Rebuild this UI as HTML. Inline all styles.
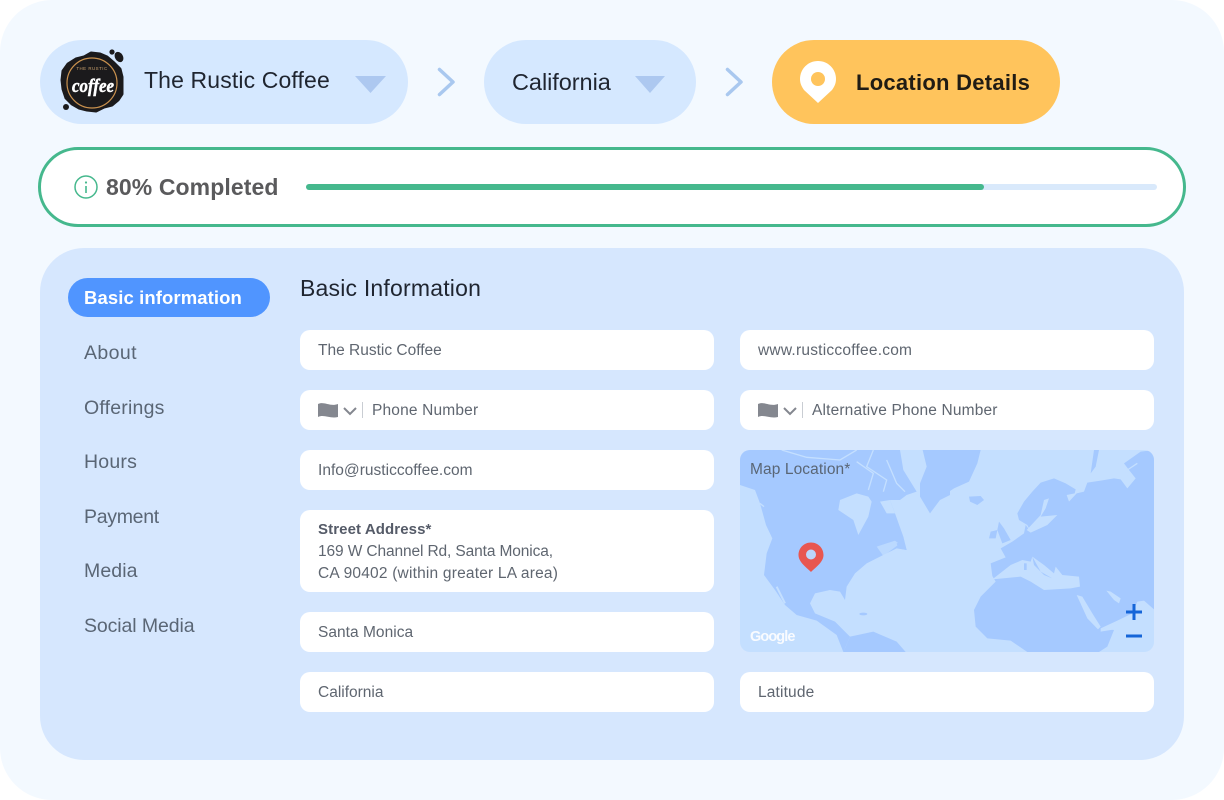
<!DOCTYPE html>
<html><head><meta charset="utf-8"><style>
html,body{margin:0;padding:0;background:#fff}
body{width:1224px;height:800px;position:relative;overflow:hidden;font-family:"Liberation Sans",sans-serif}
#bg{position:absolute;left:0;top:0;width:1224px;height:800px;background:#f3f9ff;border-radius:52px}
.a{position:absolute}
.t{position:absolute;white-space:nowrap;line-height:1}
.pill{position:absolute;background:#d5e8ff;height:84px;top:40px;border-radius:42px}
.f{position:absolute;background:#fff;border-radius:10px;height:40px;width:414px}
.l{left:300px}.r{left:740px}
.ft{position:absolute;white-space:nowrap;font-size:15.500px;line-height:1;color:#5f6670;letter-spacing:0}
.n{position:absolute;left:84px;white-space:nowrap;font-size:19.500px;line-height:1;color:#5a6675;letter-spacing:.1px}
</style></head><body>
<div id="bg"></div>

<div class="pill" style="left:40px;width:368px"></div>
<div class="pill" style="left:484px;width:212px"></div>
<div class="pill" style="left:772px;width:288px;background:#ffc45c"></div>

<svg class="a" style="left:54px;top:44px" width="76" height="76" viewBox="0 0 76 76">
<path d="M8 36 L9 27 L14 20 L22 15 L30 13 L37 9 L46 10 L53 13 L60 19 L66 25 L68 33 L68 42 L68 50 L64 56 L58 61 L50 63 L42 67 L33 66 L25 64 L18 60 L12 54 L9 45 Z" fill="#1b1a1c" stroke="#1b1a1c" stroke-width="3" stroke-linejoin="round"/>
<circle cx="58" cy="8" r="2.600" fill="#1b1a1c"/><ellipse cx="65" cy="13" rx="4" ry="5.500" transform="rotate(-30 65 13)" fill="#1b1a1c"/><circle cx="12" cy="63" r="3" fill="#1b1a1c"/>
<circle cx="38" cy="39" r="25" fill="none" stroke="#c9914e" stroke-width="1.200"/>
<text x="38" y="26" font-size="4.400" fill="#c9a06c" text-anchor="middle" font-family="Liberation Sans" letter-spacing=".5">THE RUSTIC</text>
<text x="39" y="48" font-size="19" font-weight="700" font-style="italic" fill="#fff" stroke="#fff" stroke-width=".5" text-anchor="middle" font-family="Liberation Serif" textLength="42" lengthAdjust="spacingAndGlyphs">coffee</text>
</svg>

<div class="t" style="left:144px;top:69px;font-size:23px;color:#1f2530;letter-spacing:.13px">The Rustic Coffee</div>
<svg class="a" style="left:355px;top:76px" width="31" height="17"><path d="M0 0H31L15.500 17Z" fill="#adc8f0"/></svg>
<svg class="a" style="left:436px;top:66px" width="20" height="32" fill="none"><path d="M3.500 3.500L17 16L3.500 28.500" stroke="#a9c8ef" stroke-width="3.500" stroke-linecap="round" stroke-linejoin="round"/></svg>
<div class="t" style="left:512px;top:71px;font-size:23.500px;color:#1f2530;letter-spacing:-.05px">California</div>
<svg class="a" style="left:635px;top:76px" width="30" height="17"><path d="M0 0H30L15 17Z" fill="#adc8f0"/></svg>
<svg class="a" style="left:724px;top:66px" width="20" height="32" fill="none"><path d="M3.500 3.500L17 16L3.500 28.500" stroke="#a9c8ef" stroke-width="3.500" stroke-linecap="round" stroke-linejoin="round"/></svg>
<svg class="a" style="left:800px;top:61px" width="36" height="42" viewBox="0 0 36 42"><path d="M18 0C8 0 0 8 0 18C0 23 2 26 4 29L18 42L32 29C34 26 36 23 36 18C36 8 28 0 18 0Z" fill="#fff"/><circle cx="18" cy="18" r="7" fill="#ffc45c"/></svg>
<div class="t" style="left:856px;top:72px;font-size:22px;font-weight:700;color:#201c14;letter-spacing:.26px">Location Details</div>

<div class="a" style="left:38px;top:147px;width:1148px;height:80px;box-sizing:border-box;border:3px solid #45b88d;border-radius:40px;background:#fff"></div>
<svg class="a" style="left:74px;top:175px" width="24" height="24" fill="none"><circle cx="12" cy="12" r="11" stroke="#45b88d" stroke-width="1.500"/><path d="M12 11V18" stroke="#45b88d" stroke-width="1.600"/><circle cx="12" cy="7.500" r="1.100" fill="#45b88d"/></svg>
<div class="t" style="left:106px;top:176px;font-size:23px;font-weight:700;color:#5a5a5c;letter-spacing:.1px">80% Completed</div>
<div class="a" style="left:306px;top:184px;width:851px;height:6px;border-radius:3px;background:#d9e9fb"></div>
<div class="a" style="left:306px;top:184px;width:678px;height:6px;border-radius:3px;background:#45b88d"></div>

<div class="a" style="left:40px;top:248px;width:1144px;height:512px;border-radius:44px;background:#d6e7fe"></div>
<div class="a" style="left:68px;top:278px;width:202px;height:39px;border-radius:20px;background:#5095ff"></div>
<div class="t" style="left:84px;top:289px;font-size:18.500px;font-weight:700;color:#fff;letter-spacing:.1px">Basic information</div>
<div class="n" style="top:344px;letter-spacing:.4px">About</div>
<div class="n" style="top:399px;letter-spacing:.2px">Offerings</div>
<div class="n" style="top:453px;letter-spacing:.2px">Hours</div>
<div class="n" style="top:508px;letter-spacing:-.3px">Payment</div>
<div class="n" style="top:562px;letter-spacing:.1px">Media</div>
<div class="n" style="top:617px;letter-spacing:-.1px">Social Media</div>
<div class="t" style="left:300px;top:277px;font-size:23px;color:#1f2530;letter-spacing:.2px">Basic Information</div>

<div class="f l" style="top:330px"></div><div class="ft" style="left:318px;top:343px">The Rustic Coffee</div>
<div class="f r" style="top:330px"></div><div class="ft" style="left:758px;top:343px;letter-spacing:.23px">www.rusticcoffee.com</div>
<div class="f l" style="top:390px"></div>
<svg class="a" style="left:318px;top:402px" width="46" height="18" fill="none"><path d="M0 2C6 -1 12 5 20 2V15C12 17 6 12 0 15Z" fill="#84878f"/><path d="M26 6L32 12L38 6" stroke="#84878f" stroke-width="2"/><path d="M44.500 0V16" stroke="#c9cdd3"/></svg>
<div class="ft" style="left:372px;top:403px;letter-spacing:.17px">Phone Number</div>
<div class="f r" style="top:390px"></div>
<svg class="a" style="left:758px;top:402px" width="46" height="18" fill="none"><path d="M0 2C6 -1 12 5 20 2V15C12 17 6 12 0 15Z" fill="#84878f"/><path d="M26 6L32 12L38 6" stroke="#84878f" stroke-width="2"/><path d="M44.500 0V16" stroke="#c9cdd3"/></svg>
<div class="ft" style="left:812px;top:403px;letter-spacing:.16px">Alternative Phone Number</div>
<div class="f l" style="top:450px"></div><div class="ft" style="left:318px;top:463px;letter-spacing:.02px">Info@rusticcoffee.com</div>
<div class="f l" style="top:510px;height:82px"></div>
<div class="ft" style="left:318px;top:522px;font-size:15px;font-weight:700;color:#555b68;letter-spacing:.1px">Street Address*</div>
<div class="ft" style="left:318px;top:544px;letter-spacing:-.12px">169 W Channel Rd, Santa Monica,</div>
<div class="ft" style="left:318px;top:566px;letter-spacing:.2px">CA 90402 (within greater LA area)</div>
<div class="f l" style="top:612px"></div><div class="ft" style="left:318px;top:625px;letter-spacing:.03px">Santa Monica</div>
<div class="f l" style="top:672px"></div><div class="ft" style="left:318px;top:685px">California</div>
<div class="f r" style="top:672px"></div><div class="ft" style="left:758px;top:685px;letter-spacing:.15px">Latitude</div>

<svg class="a" style="left:740px;top:450px;border-radius:10px" width="414" height="202" viewBox="0 0 414 202">
<rect width="414" height="202" fill="#c4dfff"/>
<g transform="scale(.33333)" fill="#a5c9ff">
<path d="M0 0H480L490 60L530 125L500 135L480 150L450 150L465 190L490 260L500 300L470 295L420 320L380 340L345 370L320 410L315 450L300 425L270 420L225 430L210 460L225 490L285 515L330 560L310 606L290 555L230 512L170 495L135 465L105 420L72 375L80 310L97 265L78 225L60 160L45 120L0 105Z"/>
<path d="M310 606L330 560L400 545L470 575L497 606Z"/>
<path d="M548 0H630V135L600 150L570 190L540 140L540 100L560 50Z"/>
<g fill="#c4dfff"><path d="M295 180L300 150L350 130L385 140L395 155L385 200L355 255L340 210Z"/>
<path d="M420 155L450 150L465 190L440 190Z"/>
<path d="M410 290L465 272L478 282L430 318Z" opacity=".7"/>
<path d="M300 468L345 480L380 490L340 478Z"/></g>
<ellipse cx="370" cy="492" rx="12" ry="4"/>
<g fill="none" stroke="#c4dfff" stroke-width="4"><path d="M125 0L200 22L300 30L350 0"/><path d="M350 35L400 70L385 120"/><path d="M400 0L380 50L440 90L430 125"/><path d="M440 30L470 100L495 125"/><path d="M110 410L135 460" stroke-width="6"/><path d="M60 160L72 170"/></g>
<path d="M470 280L490 275L500 300L475 295Z"/>
</g>
<g transform="translate(204 0) scale(.33333)" fill="#a5c9ff">
<path d="M0 0H110L100 40L75 95L30 115L0 135Z"/>
<path d="M75 140L110 138L120 150L100 165L78 155Z"/>
<path d="M220 190L240 155L265 125L290 98L330 85L365 100L395 118L392 130L368 135L375 155L398 130L420 125L430 98L470 92L510 85L530 88L550 115L575 85L555 60L540 40L590 5L630 0V478L600 452L580 455L565 490L520 512L470 535L510 540L490 590L465 606H250L200 572L130 565L95 530L90 480L110 440L155 395L145 378L140 340L185 322L170 295L205 275L240 250L245 225L260 245L250 225L225 210Z"/>
<path d="M165 215L180 235L200 270L175 280L160 240Z"/>
<path d="M140 245L160 240L155 265L135 265Z"/>
<path d="M440 70L450 0H465L455 50Z"/>
<g fill="#c4dfff">
<path d="M145 388L200 345L235 330L260 335L265 320L300 345L330 370L335 350L355 375L405 380L408 410L380 415L300 420L260 395L230 380Z"/>
<path d="M248 240L290 195L300 150L315 145L305 175L290 200L340 195L310 225L260 248Z"/>
<path d="M398 435L415 440L445 490L470 530L462 538L430 505Z"/>
<path d="M487 422L500 425L530 445L525 460L510 450Z"/>
<path d="M470 535L512 538L470 545Z"/>
</g>
<path d="M240 340L248 340L248 360L240 360Z"/>
<path d="M265 320L290 365L325 385L300 375L270 345Z"/>
<g fill="none" stroke="#c4dfff" stroke-width="4"><path d="M520 40L555 85"/><path d="M580 40L550 60"/></g>
</g>
<path d="M71 92.500C64 92.500 58.500 98 58.500 105C58.500 112 66 117 71 122C76 117 83.500 112 83.500 105C83.500 98 78 92.500 71 92.500Z" fill="#e85650"/><circle cx="71" cy="104.500" r="5" fill="#bcd6fb"/>
<path d="M386 162H402M394 154V170" stroke="#1565d8" stroke-width="3" fill="none"/>
<path d="M386 186H402" stroke="#1565d8" stroke-width="3" fill="none"/>
</svg>
<div class="ft" style="left:750px;top:462px;color:#5a6675;letter-spacing:.1px">Map Location*</div>
<div class="t" style="left:750px;top:630px;font-size:14.500px;font-weight:700;color:#fff;opacity:.9;letter-spacing:-.9px">Google</div>
</body></html>
